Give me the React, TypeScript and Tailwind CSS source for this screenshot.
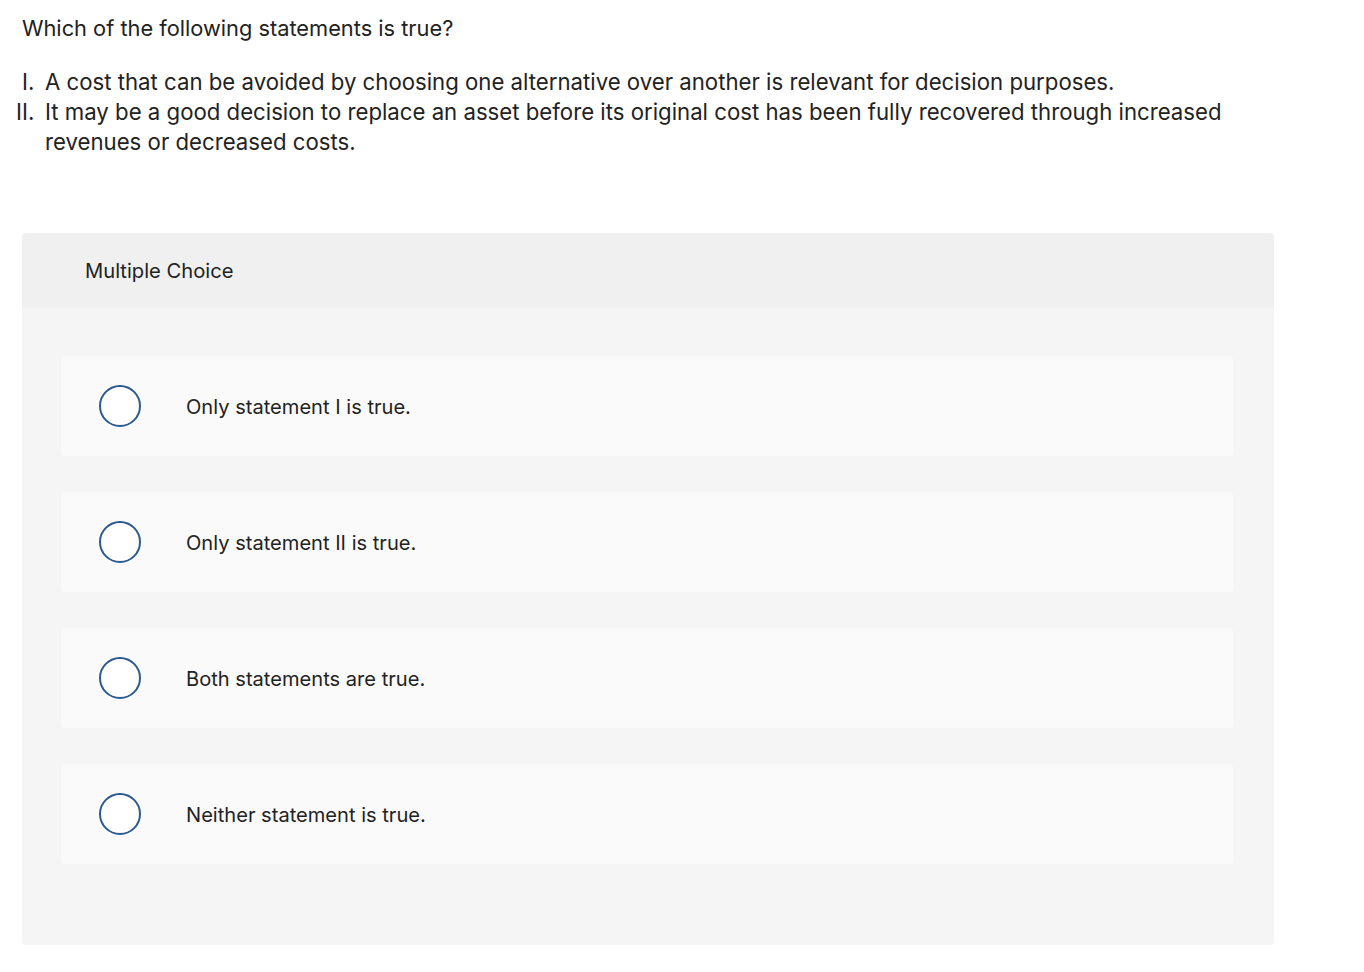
import React from 'react';

const options = [
  'Only statement I is true.',
  'Only statement II is true.',
  'Both statements are true.',
  'Neither statement is true.',
];

export default function App() {
  return (
    <div
      className="min-h-screen bg-white text-[#222222] px-[22px] pt-[13px]"
      style={{ fontFamily: 'Inter, "Open Sans", sans-serif' }}
    >
      <p className="text-[21.8px] leading-[30px]">Which of the following statements is true?</p>

      <ol className="mt-[24px] text-[22.2px] leading-[30px]">
        <li className="flex">
          <span className="w-[23px] shrink-0">I.</span>
          <span>A cost that can be avoided by choosing one alternative over another is relevant for decision purposes.</span>
        </li>
        <li className="flex -ml-[6px]">
          <span className="w-[29px] shrink-0">II.</span>
          <span className="max-w-[1195px]">
            It may be a good decision to replace an asset before its original cost has been fully recovered through increased revenues or decreased costs.
          </span>
        </li>
      </ol>

      <div className="mt-[76px] w-[1252px] rounded-[4px] bg-[#f5f5f5] overflow-hidden">
        <div className="h-[75px] bg-[#f0f0f0] pl-[63px] pt-[2px] flex items-center">
          <span className="text-[20.2px]">Multiple Choice</span>
        </div>
        <div className="pl-[39px] pr-[41px] pt-[48px] pb-[81px] flex flex-col gap-[36px]">
          {options.map((o) => (
            <label key={o} className="h-[100px] rounded-[4px] bg-[#fafafa] flex items-center cursor-pointer">
              <span className="ml-[38px] w-[42px] h-[42px] rounded-full border-2 border-[#2b5a8e] bg-white shrink-0" />
              <span className="ml-[45px] pt-[2px] text-[20.1px]">{o}</span>
            </label>
          ))}
        </div>
      </div>
    </div>
  );
}
